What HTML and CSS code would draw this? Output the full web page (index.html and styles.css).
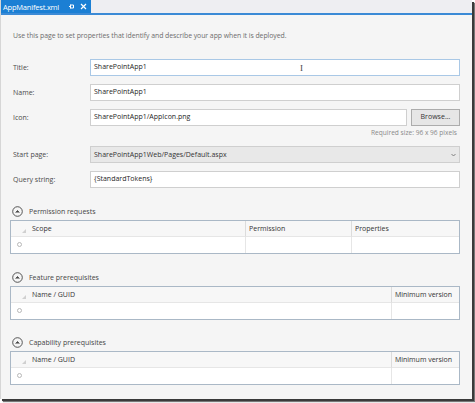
FILE: index.html
```html
<!DOCTYPE html>
<html>
<head>
<meta charset="utf-8">
<link rel="stylesheet" href="styles.css">
</head>
<body>
<div class="window">
  <div class="tabstrip">
    <div class="tab">
      <span class="tab-title">AppManifest.xml</span>
      <svg class="pin" width="7" height="7" viewBox="0 0 7 7"><path d="M1 3.5h1.5M2.5 1.5v4M2.5 2h3v3h-3" fill="none" stroke="#fff" stroke-width="1"/></svg>
      <svg class="close" width="7" height="7" viewBox="0 0 7 7"><path d="M1 1L6 6M6 1L1 6" stroke="#fff" stroke-width="1.2"/></svg>
    </div>
  </div>
  <div class="content">
    <p class="intro">Use this page to set properties that identify and describe your app when it is deployed.</p>
    <div class="form">
      <label class="lbl">Title:</label>
      <div class="field"><div class="input focus">SharePointApp1<span class="ibeam">I</span></div></div>
      <label class="lbl">Name:</label>
      <div class="field"><div class="input">SharePointApp1</div></div>
      <label class="lbl">Icon:</label>
      <div class="field">
        <div class="browse-row"><div class="input grow">SharePointApp1/AppIcon.png</div><div class="btn">Browse...</div></div>
        <div class="hint">Required size: 96 x 96 pixels</div>
      </div>
      <label class="lbl">Start page:</label>
      <div class="field"><div class="input select">SharePointApp1Web/Pages/Default.aspx<svg class="caret" width="5" height="4" viewBox="0 0 5 4"><path d="M0.5 1L2.5 3L4.5 1" fill="none" stroke="#777" stroke-width="0.9"/></svg></div></div>
      <label class="lbl">Query string:</label>
      <div class="field"><div class="input">{StandardTokens}</div></div>
    </div>

    <div class="section perm">
      <div class="sec-head"><span class="chev"><svg width="11" height="11" viewBox="0 0 11 11"><circle cx="5.5" cy="5.5" r="4.8" fill="none" stroke="#444" stroke-width="0.9"/><path d="M3.6 6.5L5.5 4.5L7.4 6.5" fill="#444" stroke="#444" stroke-width="0.8"/></svg></span>Permission requests</div>
      <div class="grid g3">
        <div class="rh corner"></div><div class="th">Scope</div><div class="th">Permission</div><div class="th">Properties</div>
        <div class="rh"><span class="dot"></span></div><div class="td"></div><div class="td"></div><div class="td"></div>
      </div>
    </div>

    <div class="section feat">
      <div class="sec-head"><span class="chev"><svg width="11" height="11" viewBox="0 0 11 11"><circle cx="5.5" cy="5.5" r="4.8" fill="none" stroke="#444" stroke-width="0.9"/><path d="M3.6 6.5L5.5 4.5L7.4 6.5" fill="#444" stroke="#444" stroke-width="0.8"/></svg></span>Feature prerequisites</div>
      <div class="grid g2">
        <div class="rh corner"></div><div class="th">Name / GUID</div><div class="th">Minimum version</div>
        <div class="rh"><span class="dot"></span></div><div class="td"></div><div class="td"></div>
      </div>
    </div>

    <div class="section cap">
      <div class="sec-head"><span class="chev"><svg width="11" height="11" viewBox="0 0 11 11"><circle cx="5.5" cy="5.5" r="4.8" fill="none" stroke="#444" stroke-width="0.9"/><path d="M3.6 6.5L5.5 4.5L7.4 6.5" fill="#444" stroke="#444" stroke-width="0.8"/></svg></span>Capability prerequisites</div>
      <div class="grid g2">
        <div class="rh corner"></div><div class="th">Name / GUID</div><div class="th">Minimum version</div>
        <div class="rh"><span class="dot"></span></div><div class="td"></div><div class="td"></div>
      </div>
    </div>
  </div>
</div>
</body>
</html>
```

FILE: styles.css
```css
* { box-sizing: border-box; }
html, body { margin: 0; padding: 0; background: #ffffff; }
body {
  width: 475px;
  height: 403px;
  font-family: "Open Sans", "Noto Sans", "Liberation Sans", sans-serif;
  font-size: 7px;
  color: #1e1e1e;
  overflow: hidden;
}
.window {
  width: 472px;
  height: 399px;
  background: #f5f5f5;
  border-left: 1px solid #d6d6d6;
  box-shadow: 2px 2px 0 #3a3a3a, 3px 3px 1px #777;
  overflow: hidden;
}
.tabstrip {
  height: 15px;
  background: #eeeef2;
  border-bottom: 2px solid #3b8ad6;
  display: flex;
}
.tab {
  width: 90px;
  height: 13px;
  background: #1b7fd4;
  color: #fff;
  display: flex;
  align-items: center;
  padding: 0 0 0 2px;
  font-size: 7.5px;
  letter-spacing: -0.2px;
}
.tab-title { margin-right: 9px; }
.pin { margin-right: 5px; }
.content { padding: 0 12px 0 12px; }
.intro {
  margin: 16px 0 0 0;
  height: 10px;
  line-height: 10px;
  color: #6d6d6d;
  font-size: 6.9px;
  letter-spacing: -0.05px;
}
.form {
  display: grid;
  grid-template-columns: 77px 1fr;
  row-gap: 8px;
  margin-top: 18px;
  align-items: start;
}
.lbl {
  height: 17px;
  line-height: 17px;
  color: #4a4a4a;
  font-size: 7px;
}
.input {
  height: 17px;
  background: #fff;
  border: 1px solid #cfcfcf;
  padding: 0 3px;
  line-height: 14px;
  font-size: 7px;
  color: #1e1e1e;
  position: relative;
}
.input.focus { border-color: #a9c8e6; }
.ibeam {
  position: absolute;
  left: 209px;
  top: 1px;
  color: #444;
  font-family: "Liberation Serif", serif;
  font-size: 9px;
}
.browse-row { display: flex; gap: 4px; }
.grow { flex: 1; }
.btn {
  width: 49px;
  height: 17px;
  background: #e6e6e6;
  border: 1px solid #acacac;
  text-align: center;
  line-height: 14px;
  font-size: 7px;
  color: #333;
}
.hint {
  text-align: right;
  color: #8a8a8a;
  font-size: 6.6px;
  margin-top: 2px;
  padding-right: 3px;
  height: 10px;
  line-height: 10px;
  margin-bottom: 0;
}
.select {
  background: #e8e8e8;
  border-color: #cfcfcf;
  color: #333;
  display: flex;
  align-items: center;
  justify-content: space-between;
}
.caret { margin-right: 0; }
.section { margin-left: -3px; }
.perm { margin-top: 17px; }
.feat { margin-top: 17px; }
.cap { margin-top: 16px; }
.sec-head {
  height: 12px;
  display: flex;
  align-items: center;
  color: #444;
  font-size: 7px;
  margin-left: 2px;
}
.chev { display: inline-flex; margin-right: 6px; }
.grid {
  display: grid;
  margin-top: 3px;
  width: 450px;
  border: 1px solid #aab8c6;
  background: #fff;
}
.g3 { grid-template-columns: 18px 216px 106px 1fr; grid-template-rows: 16px 16px; }
.g2 { grid-template-columns: 18px 362px 1fr; grid-template-rows: 16px 16px; }
.th {
  background: #f7f7f7;
  border-bottom: 1px solid #e6e6e6;
  border-left: 1px solid #dcdcdc;
  padding: 0 3px;
  line-height: 15px;
  font-size: 7px;
  color: #333;
}
.g3 .th:nth-child(2), .g2 .th:nth-child(2) { border-left: 0; }
.rh { background: #fff; position: relative; }
.corner { background: #f7f7f7; border-bottom: 1px solid #e6e6e6; }
.corner::after {
  content: "";
  position: absolute;
  right: 3px;
  bottom: 3px;
  width: 0; height: 0;
  border-left: 4px solid transparent;
  border-bottom: 4px solid #d0d0d0;
}
.dot {
  position: absolute;
  left: 6px;
  top: 5px;
  width: 5px;
  height: 5px;
  border: 1px solid #b8b8b8;
  border-radius: 50%;
}
.td { border-left: 1px solid #e6e6e6; }
.g3 .td:nth-child(6), .g2 .td:nth-child(5) { border-left: 0; }
```
